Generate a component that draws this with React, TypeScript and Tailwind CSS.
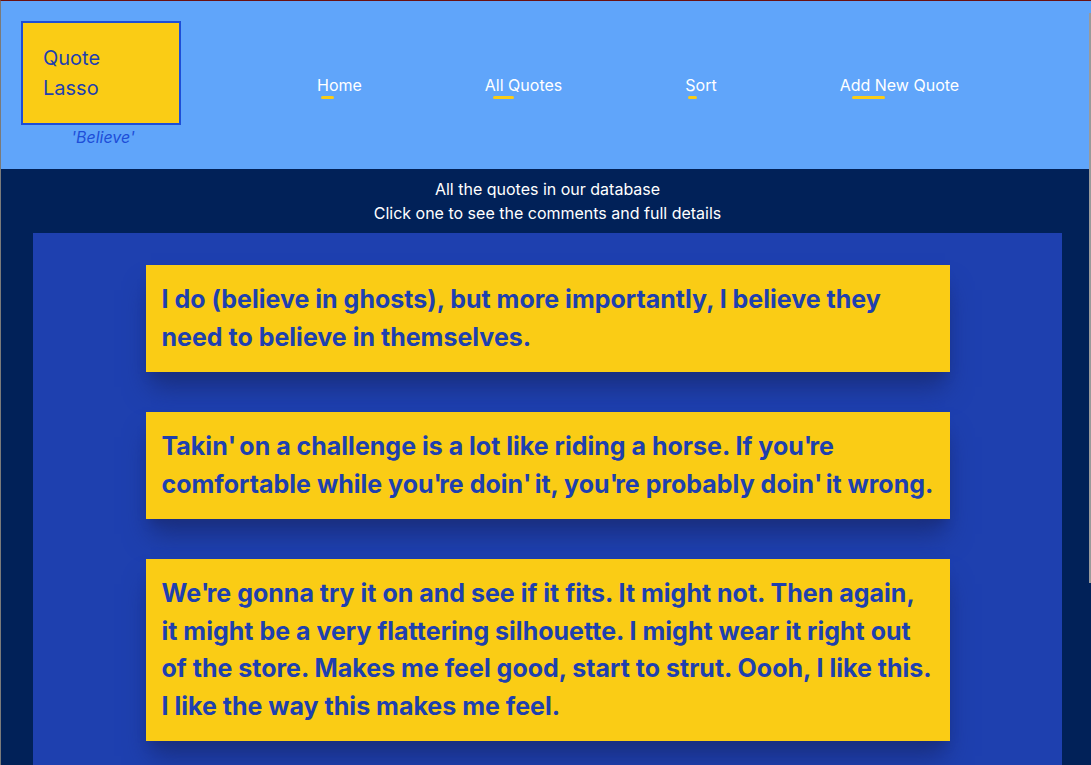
const navLinks = ["Home", "All Quotes", "Sort", "Add New Quote"];

const quotes = [
  "I do (believe in ghosts), but more importantly, I believe they need to believe in themselves.",
  "Takin' on a challenge is a lot like riding a horse. If you're comfortable while you're doin' it, you're probably doin' it wrong.",
  "We're gonna try it on and see if it fits. It might not. Then again, it might be a very flattering silhouette. I might wear it right out of the store. Makes me feel good, start to strut. Oooh, I like this. I like the way this makes me feel.",
  "I believe in hope. I believe in Believe.",
];

// apostrophes sit a little tighter in the original font
function QuoteText({ text }: { text: string }) {
  const parts = text.split("'");
  return (
    <>
      {parts.map((p, i) => (
        <span key={i}>
          {p}
          {i < parts.length - 1 && <span className="tracking-[-2.8px]">'</span>}
        </span>
      ))}
    </>
  );
}

export default function App() {
  return (
    <div
      className="relative min-h-screen border-t border-l border-t-[#6b1010] border-l-[#7a7a7a] bg-[#012158]"
      style={{ fontFamily: "Inter, 'Noto Sans', sans-serif" }}
    >
      {/* header */}
      <header className="flex items-start bg-[#60a5fa] px-5 pt-5 pb-5">
        <div className="flex w-40 flex-col">
          <div className="border-2 border-[#1d4ed8] bg-[#facc15] p-5 text-[20px] leading-[30px] text-[#1e40af]">
            <div>Quote</div>
            <div>Lasso</div>
          </div>
          <p className="pl-1 text-center text-base italic leading-6 text-[#1d4ed8]">'Believe'</p>
        </div>
        <nav className="mt-[52px] ml-[136px] flex gap-[123px]">
          {navLinks.map((l) => (
            <a key={l} href="#" className="relative text-base leading-6 text-white">
              {l}
              <span className="absolute top-[23px] left-[10%] h-[3px] w-[28%] rounded-full bg-[#facc15]" />
            </a>
          ))}
        </nav>
      </header>

      {/* quotes list */}
      <main className="ml-8 w-[1029px] pt-2">
        <div className="mb-2 text-center text-base leading-6 text-white">
          <p>All the quotes in our database</p>
          <p>Click one to see the comments and full details</p>
        </div>
        <div className="flex flex-col items-center gap-10 bg-[#1e40af] pt-8 pb-10">
          {quotes.map((q) => (
            <div
              key={q}
              className="w-[804px] bg-[#facc15] p-4 text-[25px] font-bold leading-[37.5px] text-[#1e40af] shadow-xl shadow-[#1a2f80]"
            >
              <QuoteText text={q} />
            </div>
          ))}
        </div>
      </main>

      <div className="absolute top-[12px] right-0 h-[570px] w-[2px] bg-[#9a9a9a]" />
    </div>
  );
}
